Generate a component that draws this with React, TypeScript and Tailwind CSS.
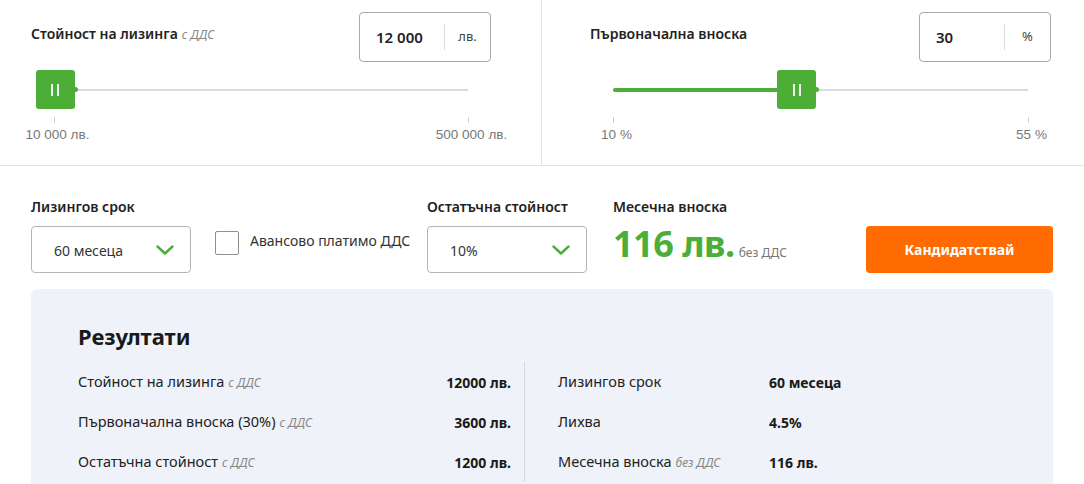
import { useState } from "react";

const GREEN = "#4cae37";

function Chevron() {
  return (
    <svg width="18" height="10" viewBox="0 0 18 10" fill="none">
      <path d="M1.5 1.5 L9 8.5 L16.5 1.5" stroke={GREEN} strokeWidth="2.4" strokeLinecap="round" strokeLinejoin="round" />
    </svg>
  );
}

function Slider({ label, note, value, unit, min, max, minLabel, maxLabel, fill, pad }: any) {
  const pct = ((value - min) / (max - min)) * 100;
  return (
    <div className={`flex flex-col h-[165px] ${pad}`}>
      <div className="flex items-start justify-between pt-[12px]">
        <div className="pt-[11px] text-[14px] font-semibold text-[#222]">
          {label}
          {note && <span className="ml-1 text-[12px] font-normal italic text-[#888]">{note}</span>}
        </div>
        <div className="flex h-[50px] w-[132px] items-center rounded-[4px] border border-[#a9a9a9] bg-white">
          <div className="flex-1 pl-[16px] text-[15px] font-semibold text-[#222]">{value.toLocaleString("fr-FR").replace(/\u202f|\u00a0/g, " ")}</div>
          <div className="h-[26px] w-px bg-[#dcdcdc]" />
          <div className="w-[45px] text-center text-[13px] text-[#444]">{unit}</div>
        </div>
      </div>
      <div className="px-[23px] pt-[8px]">
        <div className="relative h-[40px]">
          <div className="absolute left-0 right-0 top-[19px] h-[2px] bg-[#d9dbe0]" />
          {fill && <div className="absolute left-0 top-[18px] h-[4px] rounded-full" style={{ width: `${pct}%`, background: GREEN }} />}
          <div className="absolute top-0" style={{ left: `${pct}%` }}>
            <div className="relative -ml-[20px] flex h-[39px] w-[39px] items-center justify-center gap-[4px] rounded-[3px]" style={{ background: GREEN }}>
              <div className="h-[12px] w-[2px] bg-white/90" />
              <div className="h-[12px] w-[2px] bg-white/90" />
              <div className="absolute -right-[3px] top-[17px] h-[5px] w-[5px] rounded-full" style={{ background: GREEN }} />
            </div>
          </div>
        </div>
        <div className="mt-[7px] flex justify-between">
          {[minLabel, maxLabel].map((t: string) => (
            <div key={t} className="flex w-0 flex-col items-center">
              <div className="h-[6px] w-px bg-[#cfcfcf]" />
              <div className="ml-[7px] mt-[2px] whitespace-nowrap font-['Liberation_Sans',Arial,sans-serif] text-[13.5px] text-[#777]">{t}</div>
            </div>
          ))}
        </div>
      </div>
    </div>
  );
}

function Select({ value }: { value: string }) {
  return (
    <div className="flex h-[47px] w-[160px] items-center justify-between rounded-[4px] border border-[#b5b5b5] bg-white pl-[22px] pr-[16px]">
      <span className="mt-[2px] text-[14px] text-[#333]">{value}</span>
      <Chevron />
    </div>
  );
}

const leftRows = [
  ["Стойност на лизинга", "с ДДС", "12000 лв."],
  ["Първоначална вноска (30%)", "с ДДС", "3600 лв."],
  ["Остатъчна стойност", "с ДДС", "1200 лв."],
];
const rightRows = [
  ["Лизингов срок", "", "60 месеца"],
  ["Лихва", "", "4.5%"],
  ["Месечна вноска", "без ДДС", "116 лв."],
];

export default function App() {
  const [checked, setChecked] = useState(false);
  return (
    <div className="min-h-screen overflow-hidden bg-white font-['Noto_Sans',sans-serif] text-[#222]">
      <div className="grid grid-cols-[542px_542px] border-b border-[#e3e3e3]">
        <div className="border-r border-[#e3e3e3]">
          <Slider pad="pl-[31px] pr-[50px]" label="Стойност на лизинга" note="с ДДС" value={12000} unit="лв." min={10000} max={500000} minLabel="10 000 лв." maxLabel="500 000 лв." fill={false} />
        </div>
        <Slider pad="pl-[48px] pr-[33px]" label="Първоначална вноска" value={30} unit="%" min={10} max={55} minLabel="10 %" maxLabel="55 %" fill={true} />
      </div>

      <div className="px-[31px] pt-[30px]">
        <div className="flex items-start">
          <div className="w-[184px]">
            <div className="text-[14px] font-semibold">Лизингов срок</div>
            <div className="mt-[9px]"><Select value="60 месеца" /></div>
          </div>
          <label className="mt-[35px] flex w-[212px] cursor-pointer items-start gap-[11px]" onClick={() => setChecked(!checked)}>
            <div className="h-[24px] w-[24px] rounded-[2px] border border-[#8f8f8f] bg-white" />
            <span className="-mt-[1px] text-[14px] text-[#333]">Авансово платимо ДДС</span>
          </label>
          <div className="w-[186px]">
            <div className="text-[14px] font-semibold">Остатъчна стойност</div>
            <div className="mt-[9px]"><Select value="10%" /></div>
          </div>
          <div className="w-[253px]">
            <div className="text-[14px] font-semibold">Месечна вноска</div>
            <div className="mt-[5px] flex items-baseline">
              <span className="text-[36px] font-bold leading-[44px] tracking-[-0.5px]" style={{ color: GREEN }}>116 лв.</span>
              <span className="ml-[4px] text-[12px] text-[#777]">без ДДС</span>
            </div>
          </div>
          <button className="mt-[30px] h-[47px] w-[187px] rounded-[4px] bg-[#ff6b00] text-[14px] font-bold text-white">Кандидатствай</button>
        </div>

        <div className="mt-[16px] rounded-t-[6px] bg-[#eff2f8] pl-[47px] pr-[40px] pt-[32px] pb-[20px]">
          <h2 className="text-[22px] font-bold leading-[30px] text-[#1a1a1a]">Резултати</h2>
          <div className="mt-[11px] flex">
            <div className="w-[447px] border-r border-[#d5d8de] pr-[13px]">
              {leftRows.map(([l, n, v]) => (
                <div key={l} className="flex h-[40px] items-center justify-between">
                  <span className="text-[14.5px] text-[#222]">{l}{n && <span className="ml-1 text-[12px] italic text-[#888]">{n}</span>}</span>
                  <span className="text-[14px] font-bold text-[#1a1a1a]">{v}</span>
                </div>
              ))}
            </div>
            <div className="pl-[33px]">
              {rightRows.map(([l, n, v]) => (
                <div key={l} className="flex h-[40px] items-center">
                  <span className="w-[211px] text-[14.5px] text-[#222]">{l}{n && <span className="ml-1 text-[12px] italic text-[#888]">{n}</span>}</span>
                  <span className="text-[14px] font-bold text-[#1a1a1a]">{v}</span>
                </div>
              ))}
            </div>
          </div>
        </div>
      </div>
    </div>
  );
}
